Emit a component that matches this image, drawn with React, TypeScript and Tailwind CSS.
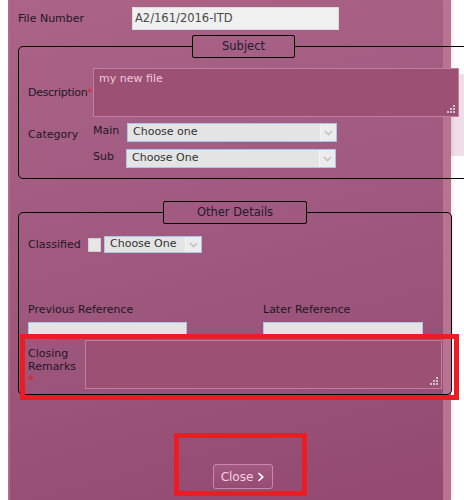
import React from 'react';

const font = 'font-["DejaVu_Sans",Verdana,sans-serif]';

const Grip: React.FC = () => (
  <svg className="absolute right-[3px] bottom-[3px]" width="9" height="9" viewBox="0 0 9 9">
    <rect x="6" y="0" width="2" height="2" fill="#c9c9c9" />
    <rect x="3" y="3" width="2" height="2" fill="#c9c9c9" />
    <rect x="6" y="3" width="2" height="2" fill="#c9c9c9" />
    <rect x="0" y="6" width="2" height="2" fill="#c9c9c9" />
    <rect x="3" y="6" width="2" height="2" fill="#c9c9c9" />
    <rect x="6" y="6" width="2" height="2" fill="#c9c9c9" />
  </svg>
);

const Chevron: React.FC = () => (
  <svg width="9" height="6" viewBox="0 0 9 6" fill="none" stroke="#c2c2c2" strokeWidth="1.6">
    <path d="M1 1l3.5 3.5L8 1" />
  </svg>
);

const Select: React.FC<{ text: string; className: string }> = ({ text, className }) => (
  <div className={`flex items-stretch bg-[#e4e4e4] border border-[#a9c6e8] text-[11px] text-[#333] ${className}`}>
    <span className="flex-1 flex items-center pl-[5px]">{text}</span>
    <span className="w-[16px] flex items-center justify-center bg-[#ececec] border-l border-[#f4f4f4]">
      <Chevron />
    </span>
  </div>
);

const Label: React.FC<{ children: React.ReactNode; className?: string }> = ({ children, className = '' }) => (
  <span className={`text-[11px] leading-[13px] text-[#231624] whitespace-nowrap ${className}`}>{children}</span>
);

const App: React.FC = () => {
  return (
    <div className={`relative w-full h-[500px] overflow-hidden bg-white ${font}`}>
      {/* page behind the dialog */}
      <div className="absolute left-[451px] top-[74px] w-[20px] h-[82px] bg-[#efdde7]" />

      <div className="relative ml-[8px] w-[443px] h-[500px] border-l-2 border-r-[8px] border-l-[#b16a8c] border-r-[#b87393] bg-[linear-gradient(165deg,#ab6488_0%,#a05a7f_45%,#934970_100%)] shadow-[2px_0_3px_rgba(0,0,0,0.08)] pt-[7px]">
        {/* File number */}
        <div className="flex items-center pl-[8px]">
          <Label className="w-[114px]">File Number</Label>
          <div className="w-[207px] h-[23px] bg-[#f0f0f0] border border-[#dcdcdc] flex items-center pl-[2px] text-[11.5px] text-[#4a4a4a]">
            A2/161/2016-ITD
          </div>
        </div>

        {/* Subject */}
        <fieldset className="ml-[8px] mt-[5px] w-[451px] min-w-0 border border-black rounded-[5px] pb-[10px]">
          <legend className="mx-auto w-[103px] h-[23px] border border-black rounded-[2px] flex items-center justify-center pt-px text-[11.5px] text-[#221a30]">
            Subject
          </legend>
          <div className="flex items-center pl-[9px] mt-[10px]">
            <Label className="w-[65px] shrink-0 tracking-[-0.3px]">
              Description<span className="text-[#e0202a]">*</span>
            </Label>
            <div className="relative w-[366px] h-[49px] shrink-0">
              <textarea
                readOnly
                value="my new file"
                className="w-full h-full resize-none bg-[#9b5074] border border-[#c27d9f] pl-[5px] pt-[3px] text-[11px] leading-[13px] text-[#f2c8dd] outline-none"
              />
              <Grip />
            </div>
          </div>
          <div className="flex pl-[9px] mt-[6px]">
            <Label className="w-[65px] mt-[5px]">Category</Label>
            <div className="flex flex-col gap-[7px]">
              <div className="flex items-start">
                <Label className="w-[34px] mt-[1px]">Main</Label>
                <Select text="Choose one" className="w-[210px] h-[19px]" />
              </div>
              <div className="flex items-start">
                <Label className="w-[33px] mt-[1px]">Sub</Label>
                <Select text="Choose One" className="w-[210px] h-[19px]" />
              </div>
            </div>
          </div>
        </fieldset>

        {/* Other details */}
        <fieldset className="ml-[8px] mt-[22px] w-[434px] min-w-0 border border-black rounded-[5px] -mb-px">
          <legend className="mx-auto w-[144px] h-[23px] border border-black rounded-[2px] flex items-center justify-center pt-px text-[11.5px] text-[#221a30]">
            Other Details
          </legend>
          <div className="flex items-center pl-[9px] mt-[12px]">
            <Label className="w-[60px]">Classified</Label>
            <div className="w-[13px] h-[14px] bg-[#e6e6e6] border border-[#cfcfcf]" />
            <Select text="Choose One" className="ml-[3px] w-[98px] h-[17px]" />
          </div>
          <div className="grid grid-cols-[235px_1fr] pl-[9px] mt-[50px]">
            <div className="flex flex-col">
              <Label>Previous Reference</Label>
              <div className="mt-[6px] w-[159px] h-[12px] bg-[#e4e4e4] border border-b-0 border-[#a9c6e8]" />
            </div>
            <div className="flex flex-col">
              <Label>Later Reference</Label>
              <div className="mt-[6px] w-[160px] h-[12px] bg-[#e4e4e4] border border-b-0 border-[#a9c6e8]" />
            </div>
          </div>
          <div className="relative z-10 ml-px w-[439px] h-[66px] -mb-[6px] border-[5px] border-[#ed1c24] flex">
            <div className="w-[60px] pl-[3px] pt-[8px] flex flex-col">
              <Label>Closing</Label>
              <Label>Remarks</Label>
              <Label className="text-[#e0202a] text-[13px]">*</Label>
            </div>
            <div className="relative mt-px w-[357px] h-[49px]">
              <textarea
                readOnly
                value=""
                className="w-full h-full resize-none bg-[#9b5074] border border-[#c27d9f] outline-none"
              />
              <Grip />
            </div>
          </div>
        </fieldset>

        {/* Close */}
        <div className="ml-[164px] mt-[39px] w-[133px] h-[63px] border-[5px] border-[#ed1c24] flex items-end justify-center pl-[5px] pb-[2px]">
          <button className="w-[60px] h-[25px] flex items-center justify-center gap-[5px] rounded-[3px] border border-[#c68aa8] bg-[linear-gradient(#a25a81,#964b72)] text-[12px] text-[#f6d1e4]">
            Close
            <svg width="7" height="10" viewBox="0 0 7 10">
              <path d="M1 0.5l5 4.5-5 4.5-1-1.2 3.6-3.3L0 1.7z" fill="#ffffff" />
            </svg>
          </button>
        </div>
      </div>
    </div>
  );
};

export default App;
